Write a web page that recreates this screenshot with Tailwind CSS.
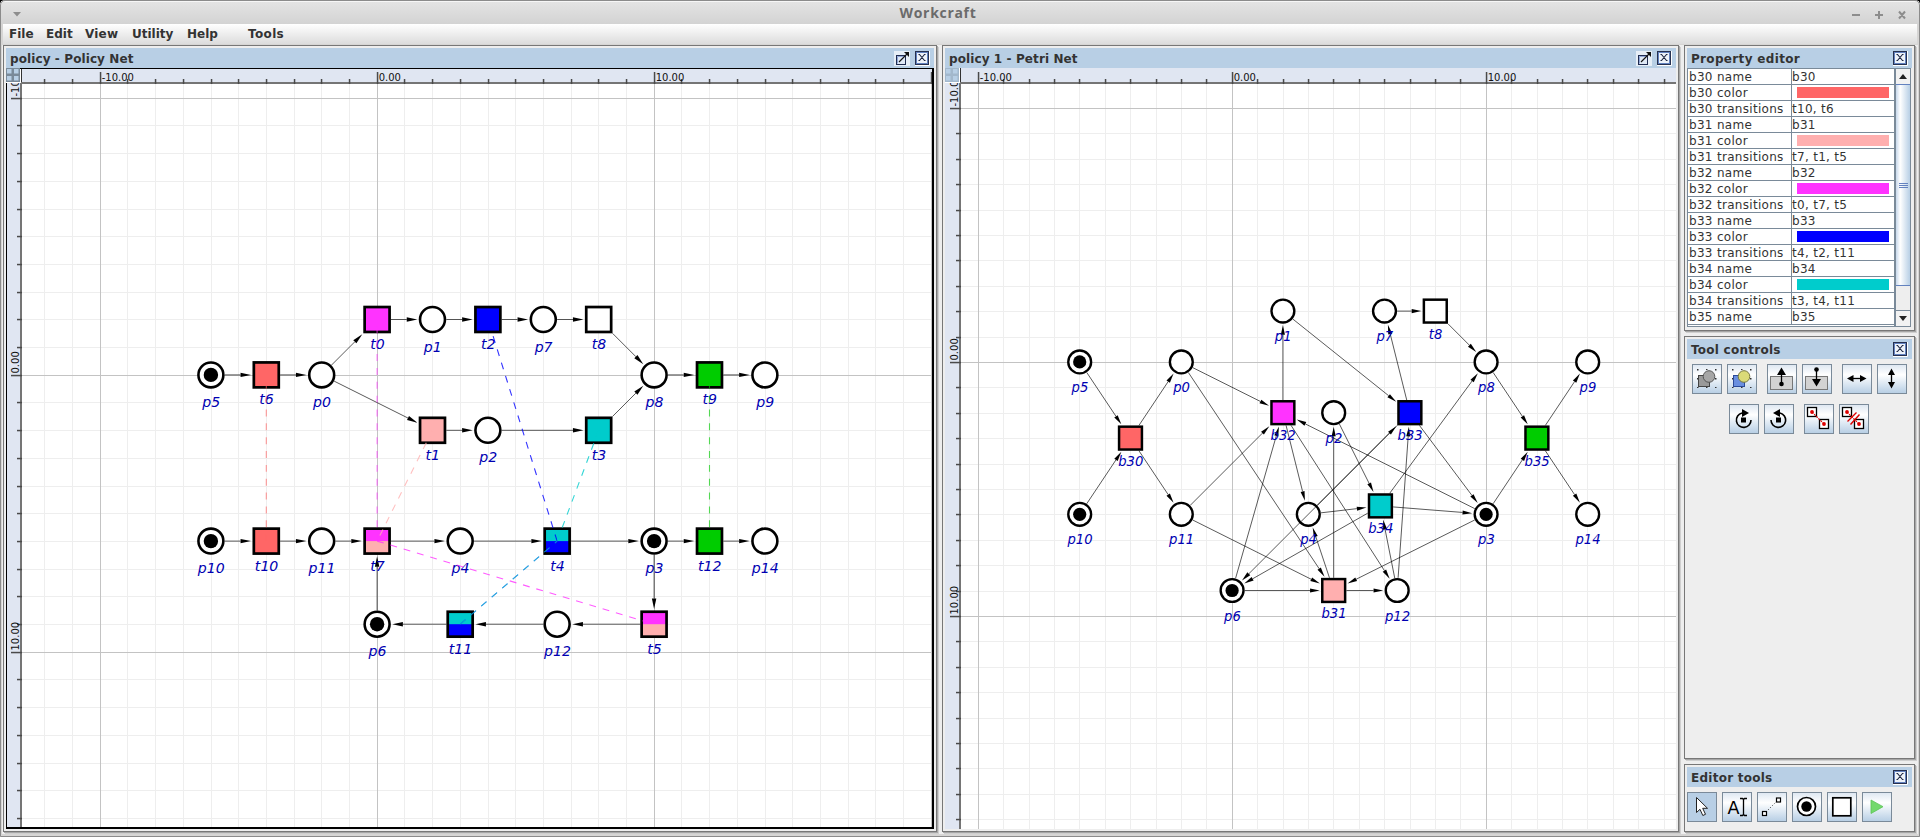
<!DOCTYPE html>
<html lang="en">
<head>
<meta charset="utf-8">
<title>Workcraft</title>
<script src="https://cdn.jsdelivr.net/npm/@tailwindcss/browser@4"></script>
</head>
<body class="bg-black">
<svg class="hidden">
  <defs>
    <symbol id="close" viewBox="0 0 15 15"><path d="M0 14.5H14.5V0" fill="none" stroke="#fff"/><rect x=".5" y=".5" width="13" height="13" fill="#b8cfe5" stroke="#26304f"/><rect x="1.5" y="1.5" width="11" height="11" fill="#eef3fa" stroke="#6382bf"/><path d="M3.5 3.5h1l5 6h1M10.500 3.500h-1l-5 6h-1" fill="none" stroke="#1c2440" stroke-width="1.100"/></symbol>
    <symbol id="max" viewBox="0 0 16 15"><rect width="16" height="15" fill="#e6eef7"/><rect x="2.500" y="4.500" width="9" height="9" fill="#dfe8f5" stroke="#1f2b50"/><path d="M3.500 12.500v-7h7" fill="none" stroke="#8fa6d6"/><path d="M5 11L13 3" fill="none" stroke="#111" stroke-width="1.100"/><path d="M10 1h5v5z" fill="#111"/></symbol>
  </defs>
</svg>
<div class="w-[1920px] h-[837px] overflow-hidden flex flex-col bg-[#d6d5d4] relative rounded-t-[5px] font-['DejaVu_Sans','Verdana',sans-serif] text-[12px] leading-[15px] text-[#333]">
  <div class="absolute inset-0 border border-[#8b8b8b] rounded-t-[5px] pointer-events-none"></div>
  <!-- window title -->
  <header class="h-[24px] shrink-0 flex items-center justify-between px-[13px] bg-linear-to-b from-[#e4e4e4] to-[#d3d3d3] border-t border-[#8b8b8b] shadow-[inset_0_1px_#f6f6f6]">
    <svg class="w-[8px] h-[5px] mt-[4px]" viewBox="0 0 8 5"><path d="M0 0h8L4 4.500z" fill="#8d8d8d"/></svg>
    <h1 class="font-['Open_Sans','Noto_Sans',sans-serif] font-bold text-[14px] leading-[20px] tracking-[0.7px] text-[#6b6b6b] ml-[4px] mt-[1px]">Workcraft</h1>
    <svg class="w-[56px] h-[10px] mt-[4px]" viewBox="0 0 56 10"><g stroke="#8d8d8d" stroke-width="2" fill="none"><path d="M1 5h8M24 5h8M28 1v8M48 1.500l6 7M54 1.500l-6 7"/></g></svg>
  </header>
  <!-- menu bar -->
  <nav class="h-[20px] mb-px ml-[3px] mr-[3px] shrink-0 flex items-start pl-[6px] pt-[3px] font-bold bg-linear-to-b from-white to-[#dcdcdc]">
    <span class="w-[37px]">File</span><span class="w-[39px]">Edit</span><span class="w-[47px] tracking-[0.2px]">View</span><span class="w-[55px]">Utility</span><span class="w-[61px]">Help</span><span class="tracking-[0.35px]">Tools</span>
  </nav>
  <main class="h-[789px] pl-[3px] pr-[3px] mr-[2px] flex gap-[5px] items-start bg-[#eee] ml-0 shadow-[inset_2px_0_#d6d5d4]">
    <section class="w-[934px] h-[787px] border border-[#777] p-[2px] bg-[#eee] shadow-[1px_1px_#a6a6a6,2px_2px_#cfcfcf] flex flex-col">
      <div class="h-[20px] shrink-0 bg-[#b8cfe5] flex items-center pl-[4px] pr-[4px]">
        <span class="font-bold grow tracking-[0.1px] pt-[2px]">policy - Policy Net</span>
        <svg class="w-[16px] h-[15px] mr-[5px]"><use href="#max"/></svg><svg class="w-[15px] h-[15px]"><use href="#close"/></svg>
      </div>
      <svg id="net1" class="w-[928px] h-[761px] bg-white" viewBox="6 68 928 761"></svg>
    </section>
    <section class="w-[737px] h-[787px] border border-[#777] p-[2px] bg-[#eee] shadow-[1px_1px_#a6a6a6,2px_2px_#cfcfcf] flex flex-col">
      <div class="h-[20px] shrink-0 bg-[#b8cfe5] flex items-center pl-[4px] pr-[4px]">
        <span class="font-bold grow tracking-[0.1px] pt-[2px]">policy 1 - Petri Net</span>
        <svg class="w-[16px] h-[15px] mr-[5px]"><use href="#max"/></svg><svg class="w-[15px] h-[15px]"><use href="#close"/></svg>
      </div>
      <svg id="net2" class="w-[731px] h-[761px] bg-white" viewBox="945 68 731 761"></svg>
    </section>
    <aside class="w-[231px] flex flex-col gap-[5px]">
      <section class="h-[286px] border border-[#777] p-[2px] bg-[#eee] shadow-[1px_1px_#a6a6a6,2px_2px_#cfcfcf]">
        <div class="h-[20px] bg-[#b8cfe5] flex items-center px-[4px]"><span class="font-bold grow tracking-[0.33px] pt-[2px]">Property editor</span><svg class="w-[15px] h-[15px]"><use href="#close"/></svg></div>
        <div class="h-[259px] w-[224px] flex bg-white border border-[#7a8a99]">
          <div id="rows" class="w-[207px] shrink-0 border-r border-[#7a8a99] h-[257px] overflow-hidden tracking-[0.3px]"></div>
          <div class="w-[15px] flex flex-col bg-[#eee] border-l border-[#7a8a99]">
            <div class="h-[15px] bg-[#f2f2f2] flex items-center justify-center"><svg class="w-[8px] h-[5px]" viewBox="0 0 8 5"><path d="M0 5L4 0l4 5z" fill="#222"/></svg></div>
            <div class="h-[202px] border-y border-[#6382bf] bg-linear-to-r from-[#c8d9ec] via-white via-30% to-[#b8cfe5] flex flex-col items-center justify-center gap-[1px]">
              <i class="w-[9px] h-px bg-[#6382bf]"></i><i class="w-[9px] h-px bg-[#6382bf]"></i><i class="w-[9px] h-px bg-[#6382bf]"></i>
            </div>
            <div class="h-[25px] border-b border-[#7a8a99]"></div>
            <div class="h-[15px] bg-[#f2f2f2] flex items-center justify-center"><svg class="w-[8px] h-[5px]" viewBox="0 0 8 5"><path d="M0 0L4 5l4-5z" fill="#222"/></svg></div>
          </div>
        </div>
      </section>
      <section class="h-[423px] border border-[#777] p-[2px] bg-[#eee] shadow-[1px_1px_#a6a6a6,2px_2px_#cfcfcf]">
        <div class="h-[20px] bg-[#b8cfe5] flex items-center px-[4px]"><span class="font-bold grow tracking-[0.25px] pt-[2px]">Tool controls</span><svg class="w-[15px] h-[15px]"><use href="#close"/></svg></div>
        <div class="flex gap-[5px] pt-[5px] pl-[5px]" data-b>
          <svg viewBox="0 0 30 30"><rect x="6.500" y="11.500" width="11" height="11" fill="#999" stroke="#444"/><circle cx="17" cy="12.500" r="5.800" fill="#a6a6a6" stroke="#555"/><path d="M5 5h1.500v1.500H5zM14 5h1.500v1H14zM23 5h1.500v1.500H23zM5 14h1v1.500H5zM23 14h1.500v1.500H23zM5 23h1.500v1H5zM14 23h1.500v1H14zM23 23h1.500v1H23z" fill="#333"/></svg>
          <svg viewBox="0 0 30 30"><rect x="6.500" y="11.500" width="11" height="11" fill="#6a8fe0" stroke="#2b4a9a"/><circle cx="17" cy="12.500" r="5.800" fill="#dada78" stroke="#77773c"/><path d="M5 5h1.500v1.500H5zM14 5h1.500v1H14zM23 5h1.500v1.500H23zM5 14h1v1.500H5zM23 14h1.500v1.500H23zM5 23h1.500v1H5zM14 23h1.500v1H14zM23 23h1.500v1H23z" fill="#333"/></svg>
          <svg class="ml-[5px]" viewBox="0 0 30 30"><rect x="3.500" y="12.500" width="22" height="13" fill="#d2d2d2" stroke="#777"/><path d="M14.500 9v11" stroke="#000" stroke-width="1.300"/><path d="M10 11L14.500 3.500 19 11z"/><circle cx="14.500" cy="20" r="2.300"/></svg>
          <svg viewBox="0 0 30 30"><rect x="3.500" y="12.500" width="22" height="13" fill="#d2d2d2" stroke="#777"/><path d="M14.500 5v12" stroke="#000" stroke-width="1.300"/><path d="M10 15L14.500 22.500 19 15z"/><circle cx="14.500" cy="5.500" r="2.300"/></svg>
          <svg class="ml-[5px]" viewBox="0 0 30 30"><path d="M9 14.500h12" stroke="#000" stroke-width="1.300"/><path d="M5 14.500L11.500 11v7zM24.500 14.500L18 11v7z"/></svg>
          <svg viewBox="0 0 30 30"><path d="M14.500 9v12" stroke="#000" stroke-width="1.300"/><path d="M14.500 4.500L11 11h7zM14.500 24.500L11 18h7z"/></svg>
        </div>
        <div class="flex gap-[5px] pt-[10px] pl-[42px]" data-b>
          <svg viewBox="0 0 30 30"><path d="M22 16A7.300 7.300 0 1 1 13 9" fill="none" stroke="#000" stroke-width="1.600"/><path d="M13 5l7 4-7 4z"/><rect x="12" y="13.500" width="5" height="5"/></svg>
          <svg viewBox="0 0 30 30"><path d="M7 16A7.300 7.300 0 1 0 16 9" fill="none" stroke="#000" stroke-width="1.600"/><path d="M16 5L9 9l7 4z"/><rect x="12" y="13.500" width="5" height="5"/></svg>
          <svg class="ml-[5px]" viewBox="0 0 30 30"><g fill="#fff" stroke="#000" stroke-width="1.300"><rect x="3.500" y="3.500" width="9" height="9"/><rect x="15.500" y="15.500" width="9" height="9"/></g><path d="M8 8l12 12" stroke="#d00" stroke-width="1.100" stroke-dasharray="2 1"/><g fill="#d00"><circle cx="8" cy="8" r="1.900"/><circle cx="20" cy="20" r="1.900"/></g></svg>
          <svg viewBox="0 0 30 30"><g fill="#fff" stroke="#000" stroke-width="1.300"><rect x="3.500" y="3.500" width="9" height="9"/><rect x="15.500" y="15.500" width="9" height="9"/></g><path d="M8 8l12 12" stroke="#d00" stroke-width="1.100" stroke-dasharray="2 1"/><path d="M8.500 17.500L17.500 8.500M11.500 20.500L20.500 10.500" stroke="#d00" stroke-width="1.400"/><g fill="#d00"><circle cx="8" cy="8" r="1.900"/><circle cx="20" cy="20" r="1.900"/></g></svg>
        </div>
      </section>
      <section class="h-[68px] border border-[#777] p-[2px] bg-[#eee] shadow-[1px_1px_#a6a6a6,2px_2px_#cfcfcf]">
        <div class="h-[20px] bg-[#b8cfe5] flex items-center px-[4px]"><span class="font-bold grow tracking-[0.25px] pt-[2px]">Editor tools</span><svg class="w-[15px] h-[15px]"><use href="#close"/></svg></div>
        <div class="flex gap-[5px] pt-[5px]" data-b="tools">
          <svg viewBox="0 0 30 30"><path d="M9.500 5.500v15l3.500-3.200 2.800 6.200 2.700-1.200-2.800-6H20.500z" fill="#fff" stroke="#222"/></svg>
          <svg viewBox="0 0 30 30"><text x="5.500" y="22" font-family="DejaVu Sans" font-size="17" textLength="12" lengthAdjust="spacingAndGlyphs">A</text><path d="M18 6.500h2.500l1 1 1-1H25M18 23.500h2.500l1-1 1 1H25M21.500 7v16" stroke="#000" stroke-width="1.300" fill="none"/></svg>
          <svg viewBox="0 0 30 30"><path d="M9 20L20 9" stroke="#333" stroke-dasharray="1 2"/><g fill="#fff" stroke="#000" stroke-width="1.200"><rect x="5.500" y="19.500" width="4" height="4"/><rect x="19.500" y="6" width="4" height="4"/></g></svg>
          <svg viewBox="0 0 30 30"><circle cx="14.500" cy="14.500" r="9" fill="#fff" stroke="#000" stroke-width="1.700"/><circle cx="14.500" cy="14.500" r="5.200"/></svg>
          <svg viewBox="0 0 30 30"><rect x="5.800" y="5.800" width="18" height="18" fill="#fff" stroke="#000" stroke-width="1.700"/></svg>
          <svg viewBox="0 0 30 30"><path d="M9 8l12 6.700L9 21.500z" fill="#73d96c" stroke="#5cc455" stroke-width=".8"/></svg>
        </div>
      </section>
    </aside>
  </main>
</div>
<script>
const C = {r:'#ff6666', k:'#ffafaf', m:'#ff33ff', b:'#0000ff', c:'#00cccc', g:'#00cc00', w:'#ffffff'};

// Buttons
const btn = ['w-[30px]','h-[30px]','shrink-0','border','border-[#7a8a99]','bg-linear-to-b','from-[#dfe8f2]','via-white','via-35%','to-[#b8cfe5]'];
document.querySelectorAll('[data-b] > svg').forEach(s => { s.classList.add(...btn); s.setAttribute('viewBox', '1 1 28 28'); });
const sel = document.querySelector('[data-b=tools] > svg');
sel.classList.remove(...btn.slice(5));
sel.classList.add('bg-[#b8cfe5]');

// Property rows
const props = [['b30','r','t10, t6'],['b31','k','t7, t1, t5'],['b32','m','t0, t7, t5'],['b33','b','t4, t2, t11'],['b34','c','t3, t4, t11'],['b35','g','t9, t12']];
const row = (a, b) => `<div class="h-[16px] flex border-b border-[#7a8a99]"><div class="w-[104px] pl-[1px] pt-[1px] shrink-0 border-r border-[#7a8a99] whitespace-nowrap">${a}</div>${b}</div>`;
document.getElementById('rows').innerHTML = props.flatMap(([n, c, t]) => [
  row(n + ' name', `<div class="pt-[1px]">${n}</div>`),
  row(n + ' color', `<div class="w-[92px] h-[11px] mt-[2px] ml-[5px]" style="background:${C[c]}"></div>`),
  row(n + ' transitions', `<div class="pt-[1px]">${t}</div>`)]).slice(0, 16).join('');

// Nets
function draw(id, o) {
  const {S, ox, oy, gx, gy, X0, X1, Y1, nodes, edges, dashes} = o;
  const Y0 = 68, P = (x, y) => [ox + x * S, oy + y * S];
  const rect = (x, y, w, h, f) => `<rect x="${x}" y="${y}" width="${w}" height="${h}" fill="${f}"/>`;
  let s = '', major = '', ticks = '', lab = '';
  const T = `font-family="DejaVu Sans" font-size="10" fill="#111"`;
  const rx = X0 + 14, ry = 82;
  for (let i = -16; i <= 22; i++) {
    const x = Math.floor(gx + i * S), y = Math.floor(gy + i * S), M = i % 10 === 0;
    if (x > rx + 1 && x < X1) {
      if (M) major += rect(x, ry, 1, Y1 - ry, '#c3c3c3'); else s += rect(x, ry, 1, Y1 - ry, '#eeeeee');
      ticks += rect(x - .2, M ? 72 : 79, 1.5, M ? 12 : 5, '#4a4a4a');
      if (M && i < 20) lab += `<text x="${x + 1.7}" y="81" ${T}>${i}.00</text>`;
    }
    if (y > 84 && y < Y1) {
      if (M) major += rect(rx, y, X1 - rx, 1, '#c3c3c3'); else s += rect(rx, y, X1 - rx, 1, '#eeeeee');
      ticks += rect(M ? X0 + 5 : X0 + 11, y - .2, M ? 11 : 5, 1.5, '#4a4a4a');
      if (M) lab += `<text transform="translate(${X0 + 13} ${y - 1.500}) rotate(-90)" ${T}>${i}.00</text>`;
    }
  }
  s += major;
  for (const n in nodes) {
    const [x, y, k, d] = nodes[n], [px, py] = P(x, y), R = .45 * S, w = .098 * S;
    if (k === 'p') {
      s += `<circle cx="${px}" cy="${py}" r="${R}" fill="#fff" stroke="#000" stroke-width="${w * .95}"/>`;
      if (d) s += `<circle cx="${px}" cy="${py}" r="${.26 * S}"/>`;
    } else {
      s += rect(px - R, py - R, 2 * R, 2 * R, C[k[0]]);
      if (k[1]) s += rect(px - R, py, 2 * R, R, C[k[1]]);
      s += `<rect x="${px - R}" y="${py - R}" width="${2 * R}" height="${2 * R}" fill="none" stroke="#000" stroke-width="${w}"/>`;
    }
  }
  for (const e of edges.split(' ')) {
    const q = e.split('>');
    for (let i = 0; i + 1 < q.length; i++) {
      const A = nodes[q[i]], B = nodes[q[i + 1]], [ax, ay] = P(A[0], A[1]), [bx, by] = P(B[0], B[1]);
      const L = Math.hypot(bx - ax, by - ay), ux = (bx - ax) / L, uy = (by - ay) / L;
      const edge = N => (N[2] === 'p' ? .5 : .5 / Math.max(Math.abs(ux), Math.abs(uy))) * S;
      const sa = edge(A), sb = L - edge(B) - .05 * S, al = .38 * S, aw = .08 * S;
      const tx = ax + ux * sb, ty = ay + uy * sb, cx = tx - ux * al, cy = ty - uy * al;
      s += `<path d="M${ax + ux * sa} ${ay + uy * sa}L${cx} ${cy}" stroke="#000" stroke-width=".65"/>`;
      s += `<path d="M${tx} ${ty}L${cx - uy * aw} ${cy + ux * aw}L${cx + uy * aw} ${cy - ux * aw}z"/>`;
    }
  }
  for (const n in nodes) {
    const [x, y, k] = nodes[n], [px, py] = P(x, y);
    const dy = k === 'p' ? o.lp : o.lt;
    s += `<text x="${px + .3}" y="${py + dy}" text-anchor="middle" font-family="DejaVu Sans" font-style="italic" font-size="${S * o.fs}" fill="#0000b2">${n}</text>`;
  }
  for (const [a, b, c, al] of dashes) {
    const [ax, ay] = P(nodes[a][0], nodes[a][1]), [bx, by] = P(nodes[b][0], nodes[b][1]);
    s += `<path d="M${ax} ${ay}L${bx} ${by}" stroke="${C[c]}" stroke-opacity="${al || .8}" stroke-width="1.100" stroke-dasharray="${S / 4}"/>`;
  }
  // rulers
  s += rect(X0, Y0, X1 - X0, 14, '#e0e6f2') + rect(X0, Y0, 14, Y1 - Y0, '#e0e6f2');
  s += rect(rx, ry, X1 - rx, 2, '#757575') + rect(rx, ry, 2, Y1 - ry, '#757575') + ticks + lab;
  const a = o.active, cb = a ? '#7a8a99' : '#a3b8cc', cl = '#b8cfe5';
  s += rect(X0, Y0, 15, 15, '#fff') + rect(X0, Y0, 14, 14, cb);
  for (const [x, y] of [[1, 1], [8, 1], [1, 8], [8, 8]]) s += rect(X0 + x, Y0 + y, 4.500, 4.500, cl);
  s += rect(X0 + 15, Y0, 1, 14, '#333');
  if (a) s += rect(X0 + 14, Y0, X1 - X0 - 14, 1, '#000') + rect(X0, 83, 1, Y1 - 83, '#000') + rect(X1 - 2, Y0, 2, Y1 - Y0, '#000') + rect(X0, Y1 - 2, X1 - X0, 2, '#000');
  document.getElementById(id).innerHTML = s;
}
draw('net1', {S:27.7, ox:377.1, oy:374.9, gx:377.2, gy:375.2, X0:6, X1:934, Y1:829, active:true, lp:32, lt:29.4, fs:.51,
  nodes:{p5:[-6,0,'p',1],t6:[-4,0,'r'],p0:[-2,0,'p'],t0:[0,-2,'m'],p1:[2,-2,'p'],t2:[4,-2,'b'],p7:[6,-2,'p'],t8:[8,-2,'w'],p8:[10,0,'p'],t9:[12,0,'g'],p9:[14,0,'p'],
    t1:[2,2,'k'],p2:[4,2,'p'],t3:[8,2,'c'],p10:[-6,6,'p',1],t10:[-4,6,'r'],p11:[-2,6,'p'],t7:[0,6,'mk'],p4:[3,6,'p'],t4:[6.5,6,'cb'],p3:[10,6,'p',1],t12:[12,6,'g'],p14:[14,6,'p'],
    p6:[0,9,'p',1],t11:[3,9,'cb'],p12:[6.5,9,'p'],t5:[10,9,'mk']},
  edges:'p5>t6>p0>t0>p1>t2>p7>t8>p8>t9>p9 p0>t1>p2>t3>p8 p10>t10>p11>t7>p4>t4>p3>t12>p14 p3>t5>p12>t11>p6>t7',
  dashes:[['t10','t6','r',.65],['t7','t0','m',.65],['t1','t7','k'],['t7','t5','m'],['t4','t2','b'],['t3','t4','c'],['t11','t4','b',.6],['t11','t4','c',.7],['t12','t9','g',.65]]});
draw('net2', {S:25.4, ox:1232.1, oy:361.9, gx:1232.3, gy:362.4, X0:945, X1:1676, Y1:829, lp:30.1, lt:27.5, fs:.52,
  nodes:{p5:[-6,0,'p',1],p10:[-6,6,'p',1],b30:[-4,3,'r'],p0:[-2,0,'p'],p11:[-2,6,'p'],p1:[2,-2,'p'],p7:[6,-2,'p'],t8:[8,-2,'w'],b32:[2,2,'m'],p2:[4,2,'p'],b33:[7,2,'b'],
    p4:[3,6,'p'],b34:[5.84,5.67,'c'],p6:[0,9,'p',1],b31:[4,9,'k'],p12:[6.5,9,'p'],p8:[10,0,'p'],p3:[10,6,'p',1],b35:[12,3,'g'],p9:[14,0,'p'],p14:[14,6,'p']},
  edges:'p5>b30 p10>b30>p0>b32>p1>b33>p7>t8>p8>b35>p9 b30>p11>b32>p4>b34>p3>b35>p14 p11>b31>p4>b33>p3>b31>p12>b34>p8 p0>b31>p2>b34>p6>b31 p6>b32>p12>b33>p6 p3>b32',
  dashes:[]});
</script>
</body>
</html>
